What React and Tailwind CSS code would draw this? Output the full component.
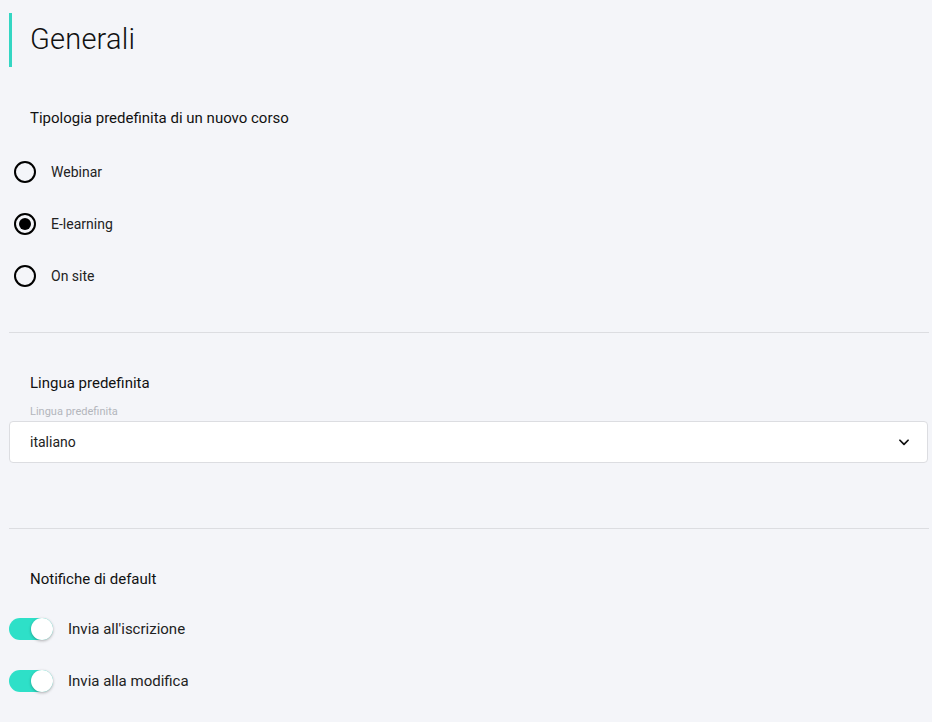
import React, { useState } from "react";

const font = { fontFamily: "Roboto, 'Noto Sans', sans-serif" };

function Radio({ label, checked, onClick }) {
  return (
    <button onClick={onClick} className="flex items-center h-[52px] gap-[15px] pl-[14px] text-left">
      <span className="w-[22px] h-[22px] rounded-full border-2 border-black flex items-center justify-center">
        {checked && <span className="w-[12px] h-[12px] rounded-full bg-black" />}
      </span>
      <span className="text-[14px] text-[#222]">{label}</span>
    </button>
  );
}

function Toggle({ label, on, onClick }) {
  return (
    <button onClick={onClick} className="flex items-center h-[52px] gap-[15px] text-left">
      <span
        className={`w-[44px] h-[22px] rounded-full flex items-center px-[1px] ${
          on ? "bg-[#2ee0c8] justify-end" : "bg-gray-300 justify-start"
        }`}
      >
        <span className="w-[22px] h-[22px] rounded-full bg-white shadow-[0_1px_3px_rgba(0,0,0,0.3)] -mr-[1px]" />
      </span>
      <span className="text-[15px] text-[#222]">{label}</span>
    </button>
  );
}

function SectionTitle({ children }) {
  return <div className="pl-[30px] text-[15px] text-[#111] leading-[24px]">{children}</div>;
}

export default function App() {
  const [type, setType] = useState("E-learning");
  const [n1, setN1] = useState(true);
  const [n2, setN2] = useState(true);

  return (
    <div style={font} className="w-[932px] h-[722px] bg-[#f4f5f9] text-[#1a1a1a] overflow-hidden">
      <div className="pt-[13px] pl-[9px]">
        <div className="flex items-center h-[54px] border-l-[3px] border-[#34d6c3] pl-[18px]">
          <h1 className="text-[29px] font-light text-[#111] tracking-[0.2px]">Generali</h1>
        </div>
      </div>

      <div className="pt-[39px]">
        <SectionTitle>Tipologia predefinita di un nuovo corso</SectionTitle>
      </div>
      <div className="flex flex-col pt-[16px]">
        {["Webinar", "E-learning", "On site"].map((t) => (
          <Radio key={t} label={t} checked={type === t} onClick={() => setType(t)} />
        ))}
      </div>

      <div className="mt-[30px] ml-[9px] mr-[3px] border-t border-[#dcdde1]" />

      <div className="pt-[38px]">
        <SectionTitle>Lingua predefinita</SectionTitle>
      </div>
      <div className="pt-[9px] pb-[1px] pl-[30px] text-[11px] text-[#b3b6bc] leading-[16px]">Lingua predefinita</div>
      <div className="ml-[9px] mr-[4px] h-[42px] bg-white border border-[#dcdde1] rounded-[4px] flex items-center justify-between pl-[20px] pr-[16px]">
        <span className="text-[14px] text-[#222]">italiano</span>
        <svg width="14" height="14" viewBox="0 0 24 24" fill="none" stroke="#111" strokeWidth="3" strokeLinecap="round" strokeLinejoin="round">
          <path d="M5 9l7 7 7-7" />
        </svg>
      </div>

      <div className="mt-[65px] ml-[9px] mr-[3px] border-t border-[#dcdde1]" />

      <div className="pt-[38px]">
        <SectionTitle>Notifiche di default</SectionTitle>
      </div>
      <div className="flex flex-col pt-[12px] pl-[9px]">
        <Toggle label="Invia all'iscrizione" on={n1} onClick={() => setN1(!n1)} />
        <Toggle label="Invia alla modifica" on={n2} onClick={() => setN2(!n2)} />
      </div>
    </div>
  );
}
